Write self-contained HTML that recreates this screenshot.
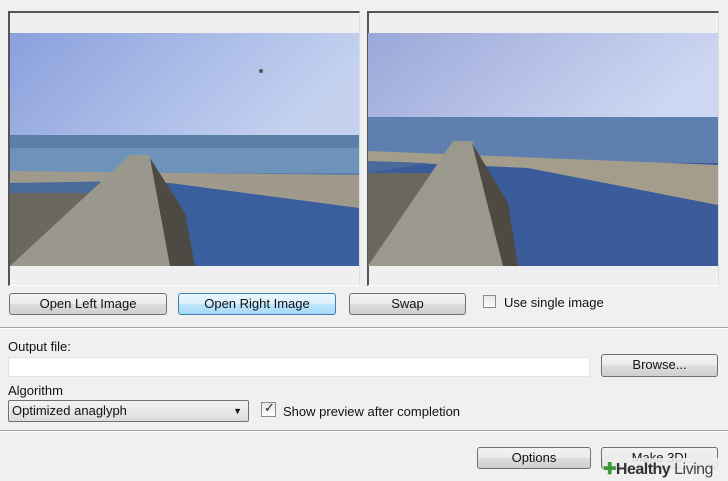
<!DOCTYPE html>
<html><head><style>
body{margin:0;width:728px;height:481px;background:#f0f0f0;position:relative;overflow:hidden;font-family:"Liberation Sans",sans-serif;font-size:13px;color:#111}
.a{position:absolute}
.btn{position:absolute;border:1px solid #707070;border-radius:3px;background:linear-gradient(#f2f2f2 0%,#ebebeb 50%,#dddddd 51%,#cfcfcf 100%);text-align:center;line-height:20px;box-sizing:border-box}
.panel{position:absolute;border-top:2px solid #555;border-left:2px solid #555;border-right:1px solid #ddd;border-bottom:1px solid #fff;background:#efefef;box-sizing:border-box}
.cb{position:absolute;width:13px;height:13px;border:1px solid #8a8a8a;background:linear-gradient(#e6e6e6,#fff);box-sizing:border-box}
.sep{position:absolute;left:0;width:728px;height:1px;background:#a0a0a0;border-bottom:1px solid #fff}
</style></head><body>
<div class="panel" style="left:8px;top:11px;width:352px;height:275px"></div>
<div class="panel" style="left:367px;top:11px;width:352px;height:275px"></div>
<svg class="a" style="left:10px;top:33px" width="349" height="233" viewBox="0 0 349 233">
<defs><linearGradient id="s1" x1="0" x2="1" y1="0" y2="0.3"><stop offset="0" stop-color="#8aa0dc"/><stop offset="1" stop-color="#c4d2f0"/></linearGradient></defs>
<rect width="349" height="233" fill="#3a5e9e"/>
<rect width="349" height="104" fill="url(#s1)"/>
<rect y="102" width="349" height="40" fill="#5a7fa8"/>
<rect y="115" width="349" height="25" fill="#6e93bb"/>
<polygon points="0,138 349,142 349,175 160,150 0,150" fill="#a09a8c"/>
<polygon points="0,150 120,148 150,165 0,160" fill="#4a6a9a"/>
<polygon points="0,160 110,160 60,233 0,233" fill="#6b6860"/>
<polygon points="120,122 140,122 160,233 0,233" fill="#9a978d"/>
<polygon points="140,125 175,180 185,233 160,233" fill="#4d4a43"/>
<circle cx="251" cy="38" r="2" fill="#555"/>
</svg>
<svg class="a" style="left:368px;top:33px" width="350" height="233" viewBox="0 0 350 233">
<defs><linearGradient id="s2" x1="0" x2="1" y1="0" y2="0.3"><stop offset="0" stop-color="#9aa8d8"/><stop offset="1" stop-color="#cdd6f2"/></linearGradient></defs>
<rect width="350" height="233" fill="#3a5c9a"/>
<rect width="350" height="90" fill="url(#s2)"/>
<rect y="84" width="350" height="46" fill="#5f80ae"/>
<polygon points="0,118 350,132 350,172 160,135 0,128" fill="#a49d8c"/>
<polygon points="0,128 60,130 0,140" fill="#4a6a9a"/>
<polygon points="0,140 80,140 50,233 0,233" fill="#6a675f"/>
<polygon points="85,108 105,108 135,233 0,233" fill="#9b988e"/>
<polygon points="104,110 140,170 150,233 135,233" fill="#4e4a42"/>
</svg>
<div class="btn" style="left:9px;top:293px;width:158px;height:22px">Open Left Image</div>
<div class="btn" style="left:178px;top:293px;width:158px;height:22px;border-color:#3c7fb1;background:linear-gradient(#eaf6fd,#d9f0fc 50%,#bee6fd 51%,#a7d9f5)">Open Right Image</div>
<div class="btn" style="left:349px;top:293px;width:117px;height:22px">Swap</div>
<div class="cb" style="left:483px;top:295px"></div>
<div class="a" style="left:504px;top:295px">Use single image</div>
<div class="sep" style="top:327px"></div>
<div class="a" style="left:8px;top:339px">Output file:</div>
<div class="a" style="left:8px;top:357px;width:582px;height:20px;background:#fff;border:1px solid #e4e4e4;box-sizing:border-box"></div>
<div class="btn" style="left:601px;top:354px;width:117px;height:23px">Browse...</div>
<div class="a" style="left:8px;top:383px">Algorithm</div>
<div class="a" style="left:8px;top:400px;width:241px;height:22px;border:1px solid #707070;border-radius:2px;background:linear-gradient(#f2f2f2,#dcdcdc);box-sizing:border-box;padding-left:3px;line-height:20px">Optimized anaglyph<span style="position:absolute;right:6px;font-size:9px">▼</span></div>
<div class="cb" style="left:261px;top:402px;width:15px;height:15px"><span style="position:absolute;left:2px;top:-3px;font-size:13px;color:#223">✓</span></div>
<div class="a" style="left:283px;top:404px">Show preview after completion</div>
<div class="sep" style="top:430px"></div>
<div class="btn" style="left:477px;top:447px;width:114px;height:22px">Options</div>
<div class="btn" style="left:601px;top:447px;width:117px;height:22px">Make 3D!</div>
<div class="a" style="left:603px;top:458px;width:125px;height:23px;background:rgba(240,240,240,0.85);font-size:16px;line-height:23px;color:#444;white-space:nowrap;letter-spacing:-0.5px"><span style="color:#3a9a3a;font-weight:bold">✚</span><b style="color:#333">Healthy</b> Living</div>
</body></html>
